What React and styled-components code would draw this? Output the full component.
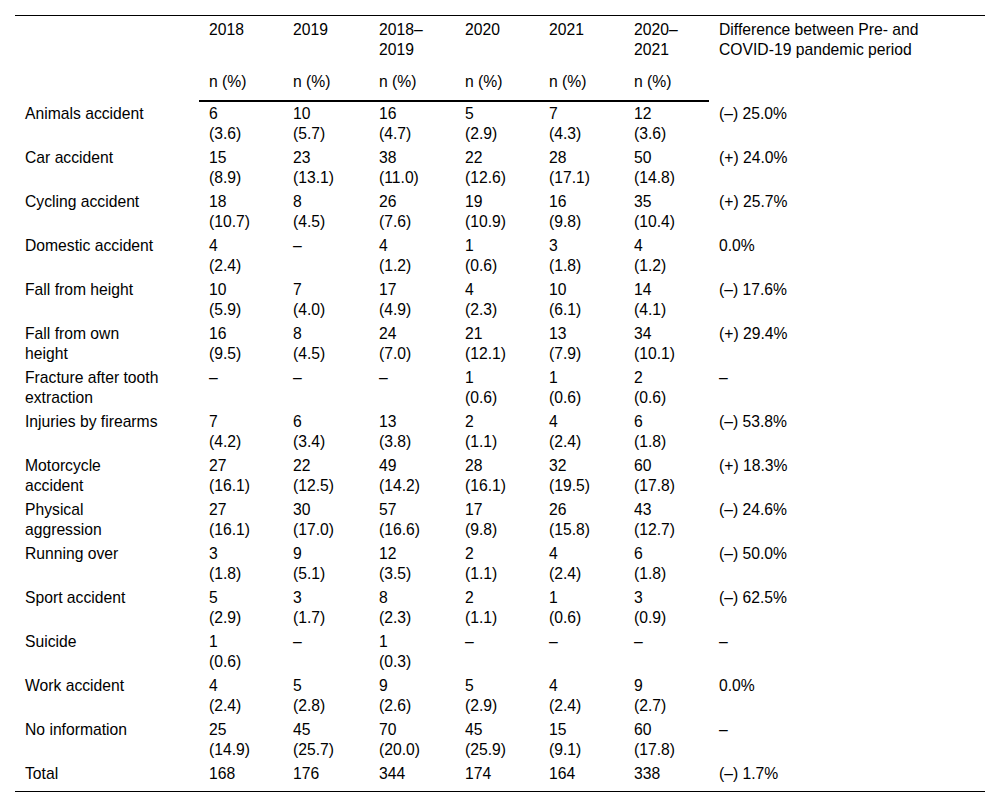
import React from 'react';
import styled, {createGlobalStyle} from 'styled-components';

const GlobalStyle = createGlobalStyle`
  body {
    margin: 0;
    background: #fff;
    font-family: "Liberation Sans", Arial, sans-serif;
    color: #000;
  }
`

const Page = styled.div`
  padding: 15px;
`

const Table = styled.table`
  width: 970px;
  table-layout: fixed;
  border-collapse: separate;
  border-spacing: 0;
  border-top: 1px solid #000;
  border-bottom: 1px solid #000;
  font-size: 15.7px;
  line-height: 20px;
`

const HeadCell = styled.th`
  font-weight: normal;
  text-align: left;
  vertical-align: top;
  padding: ${props => props.$second ? '6px 10px 8px' : '4px 10px 4px'};
  border-bottom: ${props => props.$rule ? '2px solid #000' : '2px solid transparent'};
`

const Cell = styled.td`
  text-align: left;
  vertical-align: top;
  padding: ${props => props.$last ? '2px 10px 7px' : '2px 10px'};
  white-space: nowrap;
`

const widths = [184, 84, 86, 86, 84, 85, 85, 276];

const D = '–';

// each value: [n, pct] or a dash
const rows = [
  {label: ['Animals accident'], vals: [[6, '3.6'], [10, '5.7'], [16, '4.7'], [5, '2.9'], [7, '4.3'], [12, '3.6']], diff: '(–) 25.0%'},
  {label: ['Car accident'], vals: [[15, '8.9'], [23, '13.1'], [38, '11.0'], [22, '12.6'], [28, '17.1'], [50, '14.8']], diff: '(+) 24.0%'},
  {label: ['Cycling accident'], vals: [[18, '10.7'], [8, '4.5'], [26, '7.6'], [19, '10.9'], [16, '9.8'], [35, '10.4']], diff: '(+) 25.7%'},
  {label: ['Domestic accident'], vals: [[4, '2.4'], D, [4, '1.2'], [1, '0.6'], [3, '1.8'], [4, '1.2']], diff: '0.0%'},
  {label: ['Fall from height'], vals: [[10, '5.9'], [7, '4.0'], [17, '4.9'], [4, '2.3'], [10, '6.1'], [14, '4.1']], diff: '(–) 17.6%'},
  {label: ['Fall from own', 'height'], vals: [[16, '9.5'], [8, '4.5'], [24, '7.0'], [21, '12.1'], [13, '7.9'], [34, '10.1']], diff: '(+) 29.4%'},
  {label: ['Fracture after tooth', 'extraction'], vals: [D, D, D, [1, '0.6'], [1, '0.6'], [2, '0.6']], diff: D},
  {label: ['Injuries by firearms'], vals: [[7, '4.2'], [6, '3.4'], [13, '3.8'], [2, '1.1'], [4, '2.4'], [6, '1.8']], diff: '(–) 53.8%'},
  {label: ['Motorcycle', 'accident'], vals: [[27, '16.1'], [22, '12.5'], [49, '14.2'], [28, '16.1'], [32, '19.5'], [60, '17.8']], diff: '(+) 18.3%'},
  {label: ['Physical', 'aggression'], vals: [[27, '16.1'], [30, '17.0'], [57, '16.6'], [17, '9.8'], [26, '15.8'], [43, '12.7']], diff: '(–) 24.6%'},
  {label: ['Running over'], vals: [[3, '1.8'], [9, '5.1'], [12, '3.5'], [2, '1.1'], [4, '2.4'], [6, '1.8']], diff: '(–) 50.0%'},
  {label: ['Sport accident'], vals: [[5, '2.9'], [3, '1.7'], [8, '2.3'], [2, '1.1'], [1, '0.6'], [3, '0.9']], diff: '(–) 62.5%'},
  {label: ['Suicide'], vals: [[1, '0.6'], D, [1, '0.3'], D, D, D], diff: D},
  {label: ['Work accident'], vals: [[4, '2.4'], [5, '2.8'], [9, '2.6'], [5, '2.9'], [4, '2.4'], [9, '2.7']], diff: '0.0%'},
  {label: ['No information'], vals: [[25, '14.9'], [45, '25.7'], [70, '20.0'], [45, '25.9'], [15, '9.1'], [60, '17.8']], diff: D},
];

const totals = [168, 176, 344, 174, 164, 338];

const years = [['2018'], ['2019'], ['2018–', '2019'], ['2020'], ['2021'], ['2020–', '2021']];

function Lines({parts}) {
  return parts.map((p, i) => (
    <React.Fragment key={i}>
      {i > 0 && <br />}
      {p}
    </React.Fragment>
  ));
}

export default function App() {
  return (
    <Page>
      <GlobalStyle />
      <Table>
        <colgroup>
          {widths.map((w, i) => <col key={i} style={{width: w}} />)}
        </colgroup>
        <thead>
          <tr>
            <HeadCell />
            {years.map((y, i) => (
              <HeadCell key={i}><Lines parts={y} /></HeadCell>
            ))}
            <HeadCell>Difference between Pre- and<br />COVID-19 pandemic period</HeadCell>
          </tr>
          <tr>
            <HeadCell $second />
            {years.map((y, i) => (
              <HeadCell key={i} $second $rule>n (%)</HeadCell>
            ))}
            <HeadCell $second />
          </tr>
        </thead>
        <tbody>
          {rows.map((r, i) => (
            <tr key={i}>
              <Cell><Lines parts={r.label} /></Cell>
              {r.vals.map((v, j) => (
                <Cell key={j}>
                  {v === D ? D : <>{v[0]}<br />({v[1]})</>}
                </Cell>
              ))}
              <Cell>{r.diff}</Cell>
            </tr>
          ))}
          <tr>
            <Cell $last>Total</Cell>
            {totals.map((t, j) => <Cell $last key={j}>{t}</Cell>)}
            <Cell $last>(–) 1.7%</Cell>
          </tr>
        </tbody>
      </Table>
    </Page>
  );
}
